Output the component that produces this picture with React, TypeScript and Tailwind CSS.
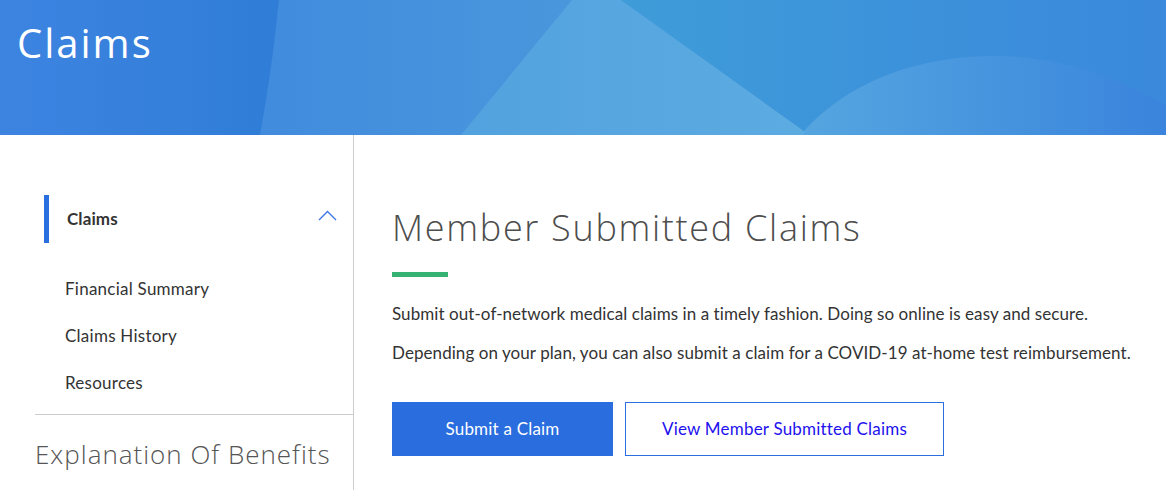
import React from "react";

const HEAD = { fontFamily: '"Open Sans", "DejaVu Sans", sans-serif' };

function HeaderBg() {
  return (
    <svg className="absolute inset-0 h-full w-full" viewBox="0 0 1166 135" preserveAspectRatio="none">
      <defs>
        <linearGradient id="base" x1="0" y1="0" x2="1" y2="0">
          <stop offset="0" stopColor="#3b82df" />
          <stop offset="0.5" stopColor="#4a97dc" />
          <stop offset="1" stopColor="#3a88dc" />
        </linearGradient>
        <linearGradient id="left" x1="0" y1="0" x2="1" y2="0">
          <stop offset="0" stopColor="#3d84e1" />
          <stop offset="1" stopColor="#2f7dd7" />
        </linearGradient>
        <linearGradient id="vtop" x1="0" y1="0" x2="1" y2="0">
          <stop offset="0" stopColor="#3f9cd8" />
          <stop offset="1" stopColor="#3a89dc" />
        </linearGradient>
        <linearGradient id="arc" x1="0" y1="0" x2="1" y2="0">
          <stop offset="0" stopColor="#55a5e0" />
          <stop offset="0.5" stopColor="#4795de" />
          <stop offset="1" stopColor="#3a84dd" />
        </linearGradient>
        <linearGradient id="tri" x1="0" y1="0" x2="1" y2="0">
          <stop offset="0" stopColor="#52a2df" />
          <stop offset="1" stopColor="#5cabe1" />
        </linearGradient>
      </defs>
      <rect x="0" y="0" width="1166" height="135" fill="url(#base)" />
      <path d="M0 0 H279 Q272 70 260 135 H0 Z" fill="url(#left)" />
      <path d="M572 0 L621 0 L804 131 L804 135 L461 135 Z" fill="url(#tri)" />
      <path d="M621 0 L1166 0 L1166 105 C1130 85 1070 57 1000 56 C940 55 860 70 804 131 Z" fill="url(#vtop)" />
      <path d="M804 131 C860 70 940 55 1000 56 C1070 57 1130 85 1166 105 L1166 135 L804 135 Z" fill="url(#arc)" />
    </svg>
  );
}

export default function App() {
  return (
    <div className="w-full bg-white" style={{ fontFamily: 'Lato, "Open Sans", sans-serif' }}>
      <header className="relative h-[135px] overflow-hidden">
        <HeaderBg />
        <h1 className="relative px-[17px] pt-[19px] text-[40px] leading-[48px] font-normal tracking-[2px] text-white" style={HEAD}>
          Claims
        </h1>
      </header>
      <div className="flex">
        <aside className="w-[354px] shrink-0 border-r border-[#cccccc] pb-[40px]">
          <div className="pl-[35px]">
            <div className="mt-[60px] flex h-[48px] items-center pr-[16px]">
              <div className="ml-[9px] h-[48px] w-[5px] bg-[#2a6fe0]" />
              <span className="ml-[18px] flex-1 text-[17px] font-bold tracking-[0.1px] text-[#333333]">Claims</span>
              <svg width="19" height="11" viewBox="0 0 19 11" className="-mt-[8px]">
                <polyline points="1,10 9.5,1.5 18,10" fill="none" stroke="#3b72e6" strokeWidth="1.3" />
              </svg>
            </div>
            <ul className="mt-[22px] mb-[8px]">
              {["Financial Summary", "Claims History", "Resources"].map((t) => (
                <li key={t} className="flex h-[47px] items-center pl-[30px] text-[17px] tracking-[0.25px] text-[#333333]">
                  {t}
                </li>
              ))}
            </ul>
            <div className="border-t border-[#cccccc]" />
            <div className="pt-[24px] text-[26px] leading-[30px] font-light tracking-[1px] text-[#555555]" style={HEAD}>
              Explanation Of Benefits
            </div>
          </div>
        </aside>
        <main className="flex-1 pl-[38px]">
          <h2 className="pt-[71px] text-[36px] leading-[44px] font-light tracking-[1.7px] text-[#4d4d4d]" style={HEAD}>
            Member Submitted Claims
          </h2>
          <div className="mt-[22px] h-[5px] w-[56px] bg-[#36b272]" />
          <p className="mt-[25px] text-[17px] leading-[24px] tracking-[0.07px] text-[#333333]">
            Submit out-of-network medical claims in a timely fashion. Doing so online is easy and secure.
          </p>
          <p className="mt-[15px] text-[17px] leading-[24px] tracking-[0.07px] text-[#333333]">
            Depending on your plan, you can also submit a claim for a COVID-19 at-home test reimbursement.
          </p>
          <div className="mt-[37px] flex gap-[12px]">
            <button className="flex h-[54px] w-[221px] items-center justify-center bg-[#296ddf] text-[17px] tracking-[0.2px] text-white">
              Submit a Claim
            </button>
            <button className="flex h-[54px] w-[319px] items-center justify-center border border-[#2a6fdf] bg-white text-[17px] tracking-[0.2px] text-[#2211ee]">
              View Member Submitted Claims
            </button>
          </div>
        </main>
      </div>
    </div>
  );
}
